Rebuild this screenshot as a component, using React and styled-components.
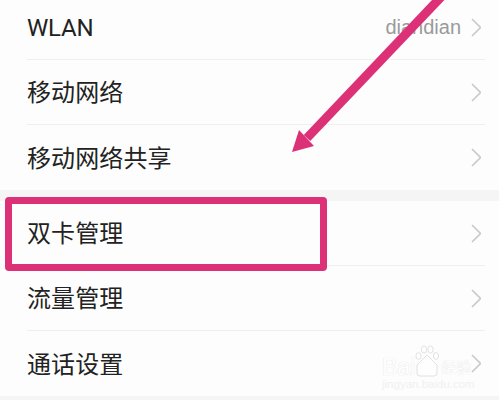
import React from 'react'
import styled, { createGlobalStyle } from 'styled-components'

const Global = createGlobalStyle`
	html, body {
		margin: 0;
		padding: 0;
		background: #f5f5f5;
	}
`
const Page = styled.div`
	position: relative;
	width: 499px;
	height: 400px;
	overflow: hidden;
	background: #f5f5f5;
	font-family: Roboto, 'Noto Sans CJK SC', sans-serif;
`
const Scroller = styled.div`
	display: flex;
	flex-direction: column;
	gap: 11px;
	margin-top: -5px;
`
const Group = styled.div`
	background: #fdfdfd;
	padding: 0 14px 0 27px;
`
const Row = styled.div`
	display: flex;
	align-items: center;
	justify-content: space-between;
	height: 65px;
	box-sizing: border-box;
	padding-right: 4px;
	&:not(:last-child) {
		border-bottom: 1px solid #f0f0f0;
	}
`
const Label = styled.span`
	color: #222222;
	font-size: 24px;
	line-height: 30px;
	padding-top: 2px;
	letter-spacing: ${p => (p.$latin ? '-0.2px' : '0.1px')};
`
const Right = styled.div`
	display: flex;
	align-items: center;
	gap: 10px;
`
const Value = styled.span`
	color: #9a9a9a;
	font-family: 'Liberation Sans', sans-serif;
	font-size: 20px;
`
const Highlight = styled.div`
	position: absolute;
	left: 5px;
	top: 197px;
	width: 322px;
	height: 74px;
	box-sizing: border-box;
	border: 7px solid #dd3177;
	border-radius: 4px;
`
const ArrowSvg = styled.svg`
	position: absolute;
	left: 0;
	top: 0;
`
const Watermark = styled.div`
	position: absolute;
	left: 382px;
	top: 343px;
	width: 92px;
	display: flex;
	flex-direction: column;
	align-items: flex-start;
	opacity: 0.7;
`
const Brand = styled.div`
	display: flex;
	align-items: flex-end;
	height: 34px;
`
const BrandText = styled.span`
	color: #ffffff;
	font-family: 'Liberation Sans', sans-serif;
	font-size: ${p => p.$size}px;
	line-height: 20px;
	text-shadow: 0 0 1px #c8c8c8;
`
const BrandCn = styled(BrandText)`
	font-family: 'Noto Sans CJK SC', sans-serif;
	margin-left: 2px;
`
const Domain = styled.span`
	color: #ececec;
	font-family: 'Liberation Sans', sans-serif;
	font-size: 11.5px;
	line-height: 13px;
	margin-top: 1px;
	white-space: nowrap;
`

const Chevron = () => (
	<svg width="10" height="19" viewBox="0 0 10 19" fill="none">
		<path d="M1 1l8.5 8.5L1 18" stroke="#c9c9c9" strokeWidth="1.6" />
	</svg>
)

const Paw = () => (
	<svg width="24" height="32" viewBox="0 0 24 32" fill="#ffffff" stroke="#d6d6d6" strokeWidth="1">
		<ellipse cx="3.5" cy="11" rx="2.6" ry="3.4" />
		<ellipse cx="9" cy="4.5" rx="2.6" ry="3.6" />
		<ellipse cx="15.5" cy="4.5" rx="2.6" ry="3.6" />
		<ellipse cx="21" cy="11" rx="2.6" ry="3.4" />
		<path d="M12 10L2 20v8a3 3 0 0 0 3 3h14a3 3 0 0 0 3-3v-8z" />
	</svg>
)

const groups = [
	[{ label: 'WLAN', value: 'diandian', latin: true }, { label: '移动网络' }, { label: '移动网络共享' }],
	[{ label: '双卡管理' }, { label: '流量管理' }, { label: '通话设置' }]
]

const App = () => (
	<Page>
		<Global />
		<Scroller>
			{groups.map((rows, i) => (
				<Group key={i}>
					{rows.map(row => (
						<Row key={row.label}>
							<Label $latin={row.latin}>{row.label}</Label>
							<Right>
								{row.value && <Value>{row.value}</Value>}
								<Chevron />
							</Right>
						</Row>
					))}
				</Group>
			))}
			<div />
		</Scroller>
		<Watermark>
			<Brand>
				<BrandText $size={23}>Bai</BrandText>
				<Paw />
				<BrandCn $size={15}>经验</BrandCn>
			</Brand>
			<Domain>jingyan.baidu.com</Domain>
		</Watermark>
		<Highlight />
		<ArrowSvg width="499" height="400" viewBox="0 0 499 400">
			<path d="M442 -4L307 138" stroke="#dd3177" strokeWidth="9" fill="none" />
			<path d="M292 152L299 130L314 146Z" fill="#dd3177" />
		</ArrowSvg>
	</Page>
)

export default App
